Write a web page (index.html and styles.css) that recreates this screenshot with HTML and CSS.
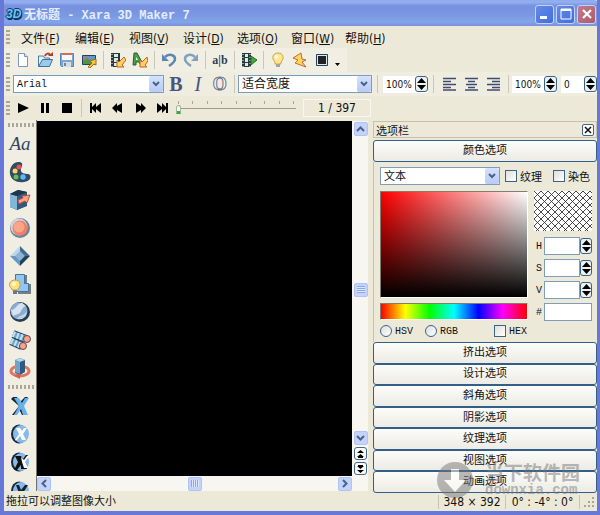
FILE: index.html
```html
<!DOCTYPE html>
<html lang="zh-CN">
<head>
    <meta charset="UTF-8">
    <meta name="viewport" content="width=device-width, initial-scale=1.0">
    <title>无标题 - Xara 3D Maker 7</title>
    <link rel="stylesheet" href="styles.css">
</head>
<body>
    <div class="window">
        <header class="titlebar">
            <span class="app-icon">3D</span>
            <h1 class="title">无标题 - Xara 3D Maker 7</h1>
            <button class="win-btn" aria-label="最小化"><svg width="16" height="16"><path d="M3 10h7v3H3z" fill="#fff"/></svg></button>
            <button class="win-btn" aria-label="最大化"><svg width="16" height="16"><path d="M3 3h10v10H3z" fill="none" stroke="#fff"/><path d="M3 3h10v2H3z" fill="#fff"/></svg></button>
            <button class="win-btn close" aria-label="关闭"><svg width="16" height="16"><path d="M4 4l8 8M12 4l-8 8" stroke="#fff" stroke-width="2.200"/></svg></button>
        </header>

        <nav class="menu">
            <span class="grip"></span>
            <a href="#">文件(<u>F</u>)</a>
            <a href="#">编辑(<u>E</u>)</a>
            <a href="#">视图(<u>V</u>)</a>
            <a href="#">设计(<u>D</u>)</a>
            <a href="#">选项(<u>O</u>)</a>
            <a href="#">窗口(<u>W</u>)</a>
            <a href="#">帮助(<u>H</u>)</a>
        </nav>

        <div class="toolbar main-tools">
            <span class="grip"></span>
            <button class="tool" aria-label="新建"><svg width="16" height="16"><path d="M3.500 1.500h6l3 3v10h-9z" fill="#fff" stroke="#7d96bd"/><path d="M9.500 1.500v3h3" fill="#dce6f5" stroke="#7d96bd"/></svg></button>
            <button class="tool" aria-label="打开"><svg width="16" height="16"><path d="M1.500 14V4h5l1 2h5v8z" fill="#e3eef6" stroke="#4d7e9f"/><path d="M1.500 14.500l4-7h10l-3 7z" fill="#9ccbe9" stroke="#3b7298"/><path d="M8 4c1-3 4-3 5-1" fill="none" stroke="#b23c2c" stroke-width="2"/><path d="M11 4h5V0z" fill="#b23c2c"/></svg></button>
            <button class="tool" aria-label="保存"><svg width="16" height="16"><path d="M1.500 1.500h13v13h-12l-1-1z" fill="#79a8d5" stroke="#5787b8"/><path d="M3 2h10v6H3z" fill="#f7f7f7"/><path d="M3 1h10v2H3z" fill="#d96a56"/><path d="M4 10h8v5H4z" fill="#d9dde2"/><path d="M5 11h2v3H5z" fill="#6685a8"/></svg></button>
            <button class="tool" aria-label="导出"><svg width="16" height="16"><path d="M1.500 3.500h13v9h-13z" fill="#5c9bd0" stroke="#27415e"/><path d="M2 9l4-3 4 3 2-2v5H2z" fill="#4f9544"/><circle cx="5" cy="6" r="1.500" fill="#e06450"/><path d="M7 15l4-4-2-2 6-2v6l-2-1-4 4z" fill="#f8c53e" stroke="#a86b15"/></svg></button>
            <span class="sep"></span>
            <button class="tool" aria-label="导出动画"><svg width="16" height="16"><path d="M1 1h9v14H1z" fill="#263c3d"/><path d="M4 2h4v3H4zM4 6h4v4H4zM4 11h4v3H4z" fill="#dfece4"/><path d="M2 2v13" stroke="#fff" stroke-dasharray="1 2"/><path d="M14 5l-5 5-2-2v7h7l-2-2 4-5z" fill="#ffd065" stroke="#bf641f"/></svg></button>
            <button class="tool" aria-label="导出矢量"><svg width="16" height="16"><path d="M2 1l3 0 6 11H8L7 10H4v3H1z" fill="#4a9d45" stroke="#28602b"/><path d="M4 5l2 3H4z" fill="#fff"/><path d="M15 5l-5 5-2-2v7h7l-2-2 3-4z" fill="#ffd065" stroke="#bf641f"/></svg></button>
            <span class="sep"></span>
            <button class="tool" aria-label="撤消"><svg width="16" height="16"><path d="M4 5c4-4 10-2 10 2 0 3-3 5-6 7" fill="none" stroke="#5e86b3" stroke-width="2.500"/><path d="M1 2v7h7z" fill="#5e86b3"/></svg></button>
            <button class="tool" aria-label="重做"><svg width="16" height="16"><path d="M12 5c-4-4-10-2-10 2 0 3 3 5 6 7" fill="none" stroke="#80a2bd" stroke-width="2.500"/><path d="M15 2v7H8z" fill="#80a2bd"/></svg></button>
            <span class="sep"></span>
            <button class="tool text-tool" aria-label="文本">a|b</button>
            <span class="sep"></span>
            <button class="tool" aria-label="播放动画"><svg width="16" height="16"><path d="M1 1h9v14H1z" fill="#263c3d"/><path d="M4 2h3v3H4zM4 6h3v4H4zM4 11h3v3H4z" fill="#dfece4"/><path d="M2 2v13M9 2v13" stroke="#fff" stroke-dasharray="1 2"/><path d="M10 4l6 4-6 5z" fill="#43a83c" stroke="#2b6e26"/></svg></button>
            <span class="sep"></span>
            <button class="tool" aria-label="灯光"><svg width="16" height="16"><path d="M6 11h4v4H6z" fill="#98a4ae"/><path d="M5 10C1 6 3 1 8 1s7 5 3 9v2H5z" fill="#ffe78a" stroke="#caa352"/><circle cx="6.500" cy="5" r="2" fill="#fffbe0"/></svg></button>
            <button class="tool" aria-label="动画"><svg width="16" height="16"><path d="M9 1L1 6l5 2-3 3 11 4-4-5 4-2-4-1z" fill="#ffd65c" stroke="#c0683a"/></svg></button>
            <button class="tool" aria-label="窗口大小"><svg width="16" height="16"><path d="M2.500 2.500h11v11h-11z" fill="#d9e9f7" stroke="#253f58"/><path d="M4 4h8v8H4z" fill="#222"/></svg></button>
            <button class="more" aria-label="更多"><svg width="5" height="3"><path d="M0 0h5L2.500 3z"/></svg></button>
        </div>

        <div class="toolbar text-tools">
            <span class="grip"></span>
            <span class="combo font-combo">
                <select aria-label="字体"><option>Arial</option></select>
                <svg class="arrow" width="14" height="16"><path d="M4 6l3 3 3-3" fill="none" stroke="#4d6185" stroke-width="2"/></svg>
            </span>
            <button class="tool letter bold" aria-label="粗体">B</button>
            <button class="tool letter italic" aria-label="斜体">I</button>
            <button class="tool letter outline" aria-label="轮廓">O</button>
            <span class="sep"></span>
            <span class="combo fit-combo">
                <select aria-label="宽度"><option>适合宽度</option></select>
                <svg class="arrow" width="14" height="16"><path d="M4 6l3 3 3-3" fill="none" stroke="#4d6185" stroke-width="2"/></svg>
            </span>
            <span class="sep wide"></span>
            <span class="spin-box"><input aria-label="宽高比" value="100%"><button class="spin" aria-label="调整"><svg width="9" height="12"><path d="M4.500 0L9 5H0zM4.500 12L9 7H0z"/></svg></button></span>
            <span class="sep wide"></span>
            <button class="tool" aria-label="左对齐"><svg width="14" height="14"><path d="M0 1.500h13M0 4.500h8M0 7.500h13M0 10.500h8M0 13h13" stroke="#414b70" stroke-width="1.500"/></svg></button>
            <button class="tool" aria-label="居中"><svg width="14" height="14"><path d="M0 1.500h13M3 4.500h7M1 7.500h11M3 10.500h7M0 13h13" stroke="#414b70" stroke-width="1.500"/></svg></button>
            <button class="tool" aria-label="右对齐"><svg width="14" height="14"><path d="M0 1.500h13M5 4.500h8M0 7.500h13M5 10.500h8M0 13h13" stroke="#414b70" stroke-width="1.500"/></svg></button>
            <span class="sep"></span>
            <span class="spin-box"><input aria-label="行距" value="100%"><button class="spin" aria-label="调整"><svg width="9" height="12"><path d="M4.500 0L9 5H0zM4.500 12L9 7H0z"/></svg></button></span>
            <span class="spin-box second"><input aria-label="字距" value="0"><button class="spin" aria-label="调整"><svg width="9" height="12"><path d="M4.500 0L9 5H0zM4.500 12L9 7H0z"/></svg></button></span>
        </div>

        <div class="toolbar play-tools">
            <span class="grip"></span>
            <button class="tool" aria-label="播放"><svg width="12" height="12"><path d="M1 1l11 5-11 5z"/></svg></button>
            <button class="tool" aria-label="暂停"><svg width="12" height="12"><path d="M2 1h3v10H2zM7 1h3v10H7z"/></svg></button>
            <button class="tool" aria-label="停止"><svg width="12" height="12"><path d="M1 1h10v10H1z"/></svg></button>
            <span class="sep"></span>
            <button class="tool" aria-label="第一帧"><svg width="12" height="12"><path d="M0 1h2v4l4-4v4l5-4v10L6 7v4L2 7v4H0z"/></svg></button>
            <button class="tool" aria-label="上一帧"><svg width="12" height="12"><path d="M0 6l5-5v3l5-3v10L5 8v3z"/></svg></button>
            <button class="tool" aria-label="下一帧"><svg width="12" height="12"><path d="M12 6L7 1v3L2 1v10l5-3v3z"/></svg></button>
            <button class="tool" aria-label="最后帧"><svg width="12" height="12"><path d="M12 1h-2v4L6 1v4L1 1v10l5-4v4l4-4v4h2z"/></svg></button>
            <div class="timeline">
                <div class="ticks"><i></i><i></i><i></i><i></i><i></i><i></i><i></i><i></i><i></i></div>
                <input type="range" aria-label="帧" min="1" max="397" value="1">
            </div>
            <output class="frame">1 / 397</output>
        </div>

        <main class="work">
            <aside class="side">
                <span class="grip-h"></span>
                <button class="side-btn aa" aria-label="文本选项">Aa</button>
                <button class="side-btn" aria-label="颜色选项"><svg width="22" height="22"><path d="M11 1C4 0 0 7 1 13s7 9 14 8 7-5 6-7-8 0-9-4 4-7-1-9z" fill="#314b63"/><circle cx="10" cy="6" r="2.500" fill="#e9524f"/><circle cx="6" cy="10" r="2.500" fill="#ffd467"/><circle cx="7" cy="16" r="2.500" fill="#63c34b"/><circle cx="14" cy="16" r="2.700" fill="#5eb9f2"/></svg></button>
                <button class="side-btn" aria-label="挤出选项"><svg width="22" height="22"><path d="M1 5l8-4 9 2v14l-10 4-7-3z" fill="#24445f"/><path d="M1 5l7 2v14l-7-3z" fill="#83b7d9"/><path d="M8 7l10-4v13L8 21z" fill="#315b7e"/><path d="M1 5l8-4 9 2L8 7z" fill="#203649"/><path d="M9 11l5-2-1-2 8-1-3 8-2-2-6 3z" fill="#ffa184" stroke="#b94d3c"/></svg></button>
                <button class="side-btn" aria-label="按钮选项"><svg width="22" height="22"><circle cx="11" cy="11" r="10" fill="#6f819d"/><circle cx="10" cy="10" r="8.500" fill="#cdd5e2"/><circle cx="11" cy="11" r="7.500" fill="#f07f66"/><circle cx="10" cy="10" r="5.500" fill="#fda58a"/></svg></button>
                <button class="side-btn" aria-label="斜角选项"><svg width="22" height="22"><path d="M11 1v10H1z" fill="#bad7eb"/><path d="M11 1l10 10H11z" fill="#456b91"/><path d="M1 11h10v10z" fill="#6499c6"/><path d="M21 11H11v10z" fill="#233f5d"/><path d="M11 6l5 5-5 5-5-5z" fill="#8cb3d4"/></svg></button>
                <button class="side-btn" aria-label="阴影选项"><svg width="22" height="22"><path d="M9 2h9v9h4v10H9z" fill="#777f83"/><path d="M6.500 1.500h9v9h4v8h-13z" fill="#8fc6f3" stroke="#4a7294"/><path d="M4 16h4v5H4z" fill="#65798c"/><path d="M3 16c-5-4-2-9 3-9s7 5 3 9v1H3z" fill="#ffe17b" stroke="#c09b55"/><circle cx="5" cy="11" r="2" fill="#fff7cf"/></svg></button>
                <button class="side-btn" aria-label="纹理选项"><svg width="22" height="22"><circle cx="11" cy="11" r="10" fill="#283c50"/><circle cx="10" cy="10" r="8.500" fill="#88add0"/><path d="M2 9c5 0 5-6 11-7l4 3c-5 1-4 7-8 8l-5 2z" fill="#d7e4ef"/><path d="M8 18c3-5 6-2 10-8l-1 5-4 3z" fill="#c1d5e8"/></svg></button>
                <button class="side-btn" aria-label="视图选项"><svg width="22" height="22"><path d="M4 5l13 5" stroke="#25435c" stroke-width="8"/><path d="M4 5l13 5" stroke="#6fa3c8" stroke-width="6"/><path d="M4 5l13 5" stroke="#c3e2f4" stroke-width="6" stroke-dasharray="2 2"/><path d="M2 12l11 5" stroke="#25435c" stroke-width="8"/><path d="M2 12l11 5" stroke="#6fa3c8" stroke-width="6"/><path d="M2 12l11 5" stroke="#c3e2f4" stroke-width="6" stroke-dasharray="2 2"/><circle cx="18" cy="10" r="3.500" fill="#f9a38c" stroke="#69434d"/><circle cx="14" cy="17" r="3.500" fill="#f9a38c" stroke="#69434d"/></svg></button>
                <button class="side-btn" aria-label="动画选项"><svg width="22" height="22"><ellipse cx="11" cy="14" rx="9" ry="5" fill="none" stroke="#e17662" stroke-width="3"/><path d="M6 3l5-2 5 2v12l-5 3-5-2z" fill="#315b7e"/><path d="M6 3l5 2v12l-5-2z" fill="#6fa3c8"/><path d="M6 3l5-2 5 2-5 2z" fill="#b2d7ef"/><path d="M11 16v6l-6-3z" fill="#d85e50"/></svg></button>
                <span class="grip-h"></span>
                <button class="side-btn" aria-label="样式一"><svg width="20" height="20"><path d="M1 3l2-2h4l3 5 5-5h3l-6 9 5 9h-5l-3-6-5 6H2l7-9z" fill="#172638"/><path d="M4 2h5l3 5 3-5h4l-5 8 4 9h-5l-2-6-4 6H4l5-9z" fill="#69b1e8"/></svg></button>
                <button class="side-btn" aria-label="样式二"><svg width="20" height="20"><ellipse cx="9" cy="10" rx="8" ry="9.500" fill="#172638"/><ellipse cx="11" cy="10" rx="8" ry="9" fill="#89bbea"/><path d="M6 4h4l2 3 2-3h3l-4 6 3 6h-4l-2-4-3 4H5l4-6z" fill="#fff"/></svg></button>
                <button class="side-btn" aria-label="样式三"><svg width="20" height="20"><ellipse cx="9" cy="10" rx="8" ry="9.500" fill="#172638"/><ellipse cx="11" cy="10" rx="8" ry="9" fill="#89bbea"/><path d="M5 4h6l2 3 3-4h2l-4 7 3 7h-6v-4l-4 5H4l4-8z" fill="#111"/><path d="M11 5l3 3 3-4h2l-4 6 3 6h-4l-2-6z" fill="#fff"/></svg></button>
                <button class="side-btn" aria-label="样式四"><svg width="20" height="20"><ellipse cx="9" cy="11" rx="8" ry="9.500" fill="#172638"/><ellipse cx="11" cy="11" rx="8" ry="9" fill="#89bbea"/><path d="M6 5h3l2 5 4-5h3l-5 8v5h-4v-5z" fill="#152131"/></svg></button>
            </aside>

            <section class="view">
                <div class="canvas"></div>
                <div class="vscroll">
                    <button class="scroll-btn" aria-label="向上"><svg width="9" height="6"><path d="M1 5l3.500-3.500L8 5" fill="none" stroke="#4d6185" stroke-width="2"/></svg></button>
                    <div class="rail"><span class="thumb"><i></i></span></div>
                    <button class="scroll-btn" aria-label="向下"><svg width="9" height="6"><path d="M1 1l3.500 3.500L8 1" fill="none" stroke="#4d6185" stroke-width="2"/></svg></button>
                    <button class="page-btn" aria-label="上一页"><svg width="7" height="8"><path d="M3.500 0L7 3H0zM3.500 4L7 7H0zM1 7h5v1H1z"/></svg></button>
                    <button class="page-btn" aria-label="下一页"><svg width="7" height="8"><path d="M3.500 4L7 1H0zM3.500 8L7 5H0zM1 0h5v1H1z"/></svg></button>
                </div>
                <div class="hscroll">
                    <button class="scroll-btn" aria-label="向左"><svg width="6" height="9"><path d="M5 1L1.500 4.500 5 8" fill="none" stroke="#4d6185" stroke-width="2"/></svg></button>
                    <div class="rail"><span class="thumb"><i></i></span></div>
                    <button class="scroll-btn" aria-label="向右"><svg width="6" height="9"><path d="M1 1l3.500 3.500L1 8" fill="none" stroke="#4d6185" stroke-width="2"/></svg></button>
                </div>
            </section>

            <section class="options">
                <div class="options-head">
                    <h2>选项栏</h2>
                    <button class="panel-close" aria-label="关闭选项栏"><svg width="8" height="8"><path d="M1 1l6 6M7 1L1 7" stroke="#111" stroke-width="1.500"/></svg></button>
                </div>
                <button class="group-btn first">颜色选项</button>
                <div class="color-body">
                    <div class="pick-row">
                        <span class="combo">
                            <select aria-label="对象"><option>文本</option></select>
                            <svg class="arrow" width="14" height="16"><path d="M4 6l3 3 3-3" fill="none" stroke="#4d6185" stroke-width="2"/></svg>
                        </span>
                        <label><input type="checkbox">纹理</label>
                        <label class="tint"><input type="checkbox">染色</label>
                    </div>
                    <div class="color-grid">
                        <div class="left-col">
                            <div class="shade"></div>
                            <div class="hue"></div>
                        </div>
                        <div class="right-col">
                            <svg class="swatch" width="58" height="40">
                                <defs><pattern id="hatch" width="7" height="7" patternUnits="userSpaceOnUse"><path d="M0 0l7 7M7 0L0 7" stroke="#333" stroke-width="0.900"/></pattern></defs>
                                <rect width="58" height="40" fill="#fff"/><rect width="58" height="40" fill="url(#hatch)"/>
                            </svg>
                            <div class="value"><label for="h">H</label><input id="h"><button class="spin" aria-label="调整 H"><svg width="9" height="12"><path d="M4.500 0L9 5H0zM4.500 12L9 7H0z"/></svg></button></div>
                            <div class="value"><label for="s">S</label><input id="s"><button class="spin" aria-label="调整 S"><svg width="9" height="12"><path d="M4.500 0L9 5H0zM4.500 12L9 7H0z"/></svg></button></div>
                            <div class="value"><label for="v">V</label><input id="v"><button class="spin" aria-label="调整 V"><svg width="9" height="12"><path d="M4.500 0L9 5H0zM4.500 12L9 7H0z"/></svg></button></div>
                            <div class="value"><label for="hex">#</label><input id="hex"></div>
                        </div>
                    </div>
                    <div class="mode-row">
                        <label><input type="radio" name="mode">HSV</label>
                        <label><input type="radio" name="mode">RGB</label>
                        <label class="hex"><input type="checkbox">HEX</label>
                    </div>
                </div>
                <div class="groups">
                    <button class="group-btn">挤出选项</button>
                    <button class="group-btn">设计选项</button>
                    <button class="group-btn">斜角选项</button>
                    <button class="group-btn">阴影选项</button>
                    <button class="group-btn">纹理选项</button>
                    <button class="group-btn">视图选项</button>
                    <button class="group-btn">动画选项</button>
                </div>
            </section>
        </main>

        <footer class="status">
            <span class="hint">拖拉可以调整图像大小</span>
            <span class="cell size">348 × 392</span>
            <span class="cell angle">0° : -4° : 0°</span>
            <span class="cell corner"><svg width="11" height="11"><path d="M9 1h2M5 5h2M9 5h2M1 9h2M5 9h2M9 9h2" stroke="#aaa694" stroke-width="2"/></svg></span>
        </footer>

        <div class="watermark">
            <svg width="38" height="38"><circle cx="19" cy="19" r="18" fill="#777"/><path d="M15 8h8v11h7L19 31 8 19h7z" fill="#fff"/></svg>
            <div>
                <div class="mark-name">当下软件园</div>
                <div class="mark-url">downxia.com</div>
            </div>
        </div>
    </div>
</body>
</html>
```
FILE: styles.css
```css
* {
    box-sizing: border-box;
}
body {
    margin: 0;
    font-family: "DejaVu Sans Condensed", "Noto Sans CJK SC", sans-serif;
    font-size: 12px;
    color: #111;
}
button, input, select {
    font: inherit;
    color: inherit;
    margin: 0;
    padding: 0;
    border: 0;
    background: none;
}
svg {
    display: block;
    flex: none;
}
.window {
    position: relative;
    height: 100vh;
    display: flex;
    flex-direction: column;
    overflow: hidden;
    background: #ece9d8;
    border: solid #6878d8;
    border-width: 0 3px 4px 4px;
}

/* title bar */
.titlebar {
    flex: none;
    height: 26px;
    margin: 0 -3px 0 -4px;
    padding: 2px 4px 0 6px;
    display: flex;
    align-items: center;
    gap: 2px;
    background: linear-gradient(#8baaf0, #95b0ef 2px, #7691e0 6px, #7b98e2 15px, #82a5e9 22px, #7890df);
    border-radius: 6px 6px 0 0;
}
.app-icon {
    width: 16px;
    font: italic bold 12px "Liberation Sans", sans-serif;
    color: #6cc6f5;
    text-shadow: 1px 0 #0b3c6e, -1px 0 #0b3c6e, 0 1px #0b3c6e, 0 -1px #0b3c6e, 1px 2px #0b2c54;
}
.title {
    flex: 1;
    margin: 0;
    font: bold 12px "Liberation Mono", "Noto Sans CJK SC", monospace;
    color: #e4edff;
}
.win-btn {
    width: 19px;
    height: 19px;
    display: flex;
    align-items: center;
    justify-content: center;
    border: 1px solid #c3d2f8;
    border-radius: 3px;
    background: linear-gradient(135deg, #648be8, #426dde);
}
.win-btn.close {
    background: linear-gradient(135deg, #c17b8e, #ac5b6b);
}

/* menu and toolbars */
.menu, .toolbar {
    flex: none;
    display: flex;
    align-items: center;
    padding-left: 2px;
}
.menu {
    height: 22px;
    gap: 16px;
}
.menu .grip {
    margin-right: -5px;
}
.menu a {
    width: 38px;
    white-space: nowrap;
    color: #111;
    text-decoration: none;
}
.toolbar {
    height: 24px;
}
.grip {
    flex: none;
    width: 4px;
    height: 16px;
    margin-right: 2px;
    background: radial-gradient(circle, #aaa796 1px, transparent 1px) 0 0 / 2px 4px;
}
.main-tools {
    align-self: flex-start;
    padding-right: 4px;
    background: #f1efe3;
}
.text-tools {
    background: #efede0;
}
.play-tools {
    align-self: flex-start;
}
.tool {
    flex: none;
    width: 22px;
    height: 22px;
    display: flex;
    align-items: center;
    justify-content: center;
}
.sep {
    flex: none;
    width: 1px;
    height: 18px;
    margin: 0 3px;
    background: #cbc7b4;
}
.sep.wide {
    margin: 0 5px;
}
.text-tool {
    font: bold 12px "Liberation Serif", serif;
    color: #333d55;
}
.more {
    width: 10px;
    padding: 8px 2px 0;
}
.letter {
    font-family: "Liberation Serif", serif;
    font-size: 20px;
    color: #48557e;
}
.bold {
    font-weight: bold;
}
.italic {
    font-style: italic;
}
.outline {
    color: #f5f5f2;
    -webkit-text-stroke: 1px #68728e;
    font-weight: bold;
    font-size: 18px;
}
.combo {
    display: grid;
    height: 18px;
    background: #fff;
    border: 1px solid #7f9db9;
}
.combo select {
    grid-area: 1 / 1;
    width: 100%;
    min-width: 0;
    appearance: none;
    padding-left: 3px;
    outline: 0;
}
.arrow {
    grid-area: 1 / 1;
    justify-self: end;
    background: linear-gradient(#d5e1fd, #b7cbf7);
    border-radius: 2px;
    pointer-events: none;
}
.font-combo {
    width: 153px;
    margin: 0 1px;
}
.font-combo select {
    font-family: "Liberation Mono", monospace;
    font-size: 10px;
}
.fit-combo {
    width: 136px;
}
.spin-box {
    flex: none;
    width: 45px;
    height: 17px;
    display: flex;
    align-items: center;
    background: #fff;
}
.spin-box input {
    flex: 1;
    min-width: 0;
    padding-left: 3px;
    font-size: 10px;
}
.spin-box.second {
    width: 36px;
    margin-left: 4px;
}
.spin {
    flex: none;
    width: 13px;
    height: 16px;
    display: flex;
    align-items: center;
    justify-content: center;
    background: #edf0f1;
    border: 1px solid #376287;
    border-radius: 3px;
}
.timeline {
    width: 126px;
    height: 14px;
    padding: 0 3px;
}
.ticks {
    display: flex;
    justify-content: space-between;
    padding: 0 2px;
}
.ticks i {
    width: 1px;
    height: 3px;
    background: #aaa796;
}
.timeline input {
    display: block;
    width: 100%;
    height: 10px;
    appearance: none;
    background: linear-gradient(#9b9a90, #9b9a90) 0 4px / 100% 1px no-repeat;
}
.timeline input::-webkit-slider-thumb {
    appearance: none;
    width: 5px;
    height: 9px;
    background: linear-gradient(#f7f7f2 5px, #25b436 5px);
    border: 1px solid #a4b5a0;
    border-bottom-color: #25b436;
    border-radius: 3px 3px 0 0;
}
.frame {
    width: 68px;
    height: 18px;
    margin-left: 4px;
    border: 1px solid #f8f6ed;
    line-height: 16px;
    text-align: center;
}

/* work area */
.work {
    flex: 1;
    min-height: 0;
    display: flex;
}
.side {
    flex: none;
    width: 32px;
    margin-bottom: 2px;
    overflow: hidden;
    background: #f0eee2;
}
.grip-h {
    display: block;
    height: 4px;
    margin: 3px 2px 3px 3px;
    background: radial-gradient(circle, #aaa796 1px, transparent 1px) 0 0 / 4px 2px;
}
.side-btn {
    width: 32px;
    height: 28px;
    display: flex;
    align-items: center;
    justify-content: center;
}
.aa {
    font: italic 19px "Liberation Serif", serif;
    color: #304564;
}
.view {
    flex: 1;
    min-width: 0;
    display: grid;
    grid-template: 1fr 15px / 1fr 16px;
    margin-bottom: 2px;
    padding-top: 1px;
    border-left: 1px solid #77756b;
}
.canvas {
    background: #000;
}
.vscroll {
    grid-row: span 2;
    display: flex;
    flex-direction: column;
    align-items: center;
    padding: 1px 0 0 1px;
    background: #f7f6f1;
}
.hscroll {
    display: flex;
    align-items: center;
    background: #f7f6f1;
}
.scroll-btn, .thumb {
    flex: none;
    width: 14px;
    height: 14px;
    display: flex;
    align-items: center;
    justify-content: center;
    background: #c4d3fb;
    border: 1px solid #b0c3f4;
    border-radius: 2px;
}
.rail {
    flex: 1;
    display: flex;
    align-items: center;
    justify-content: center;
}
.vscroll .rail {
    padding-top: 12px;
}
.thumb i {
    width: 8px;
    height: 7px;
    background: repeating-linear-gradient(#8ca7e8 0 1px, #dee7ff 1px 2px);
}
.hscroll .thumb i {
    background: repeating-linear-gradient(90deg, #8ca7e8 0 1px, #dee7ff 1px 2px);
}
.page-btn {
    flex: none;
    width: 13px;
    height: 13px;
    margin-top: 2px;
    display: flex;
    align-items: center;
    justify-content: center;
    border: 1px solid #42678b;
    border-radius: 3px;
    background: #fafaf6;
}
.page-btn:last-child {
    margin-bottom: 16px;
}

/* options panel */
.options {
    flex: none;
    width: 224px;
    margin-left: 5px;
    display: flex;
    flex-direction: column;
}
.options-head {
    height: 17px;
    margin: 1px 0 2px;
    padding: 0 2px;
    display: flex;
    align-items: center;
    justify-content: space-between;
    border: 1px solid #c5c1ae;
}
.options-head h2 {
    margin: 0;
    font-size: 11px;
    font-weight: normal;
}
.panel-close {
    width: 12px;
    height: 12px;
    display: flex;
    align-items: center;
    justify-content: center;
    border: 1px solid #42678b;
    border-radius: 2px;
    background: #fff;
}
.group-btn {
    flex: 1;
    min-height: 0;
    font-size: 11px;
    line-height: 16px;
    border: 1px solid #315f88;
    border-radius: 3px;
    background: linear-gradient(#fcfcfa, #ecebe5);
}
.group-btn.first {
    flex: none;
    height: 22px;
}
.groups {
    flex: 1;
    min-height: 0;
    display: flex;
    flex-direction: column;
}
.color-body {
    flex: none;
    height: 180px;
    padding: 5px 5px 0 6px;
    border-left: 1px solid #c5c1ae;
}
.pick-row {
    display: flex;
    align-items: center;
    height: 18px;
}
.pick-row .combo {
    width: 120px;
    margin-right: 5px;
    font-size: 11px;
}
.pick-row label, .mode-row label {
    display: flex;
    align-items: center;
    gap: 3px;
    font-size: 11px;
}
.tint {
    margin-left: 11px;
}
input[type="checkbox"], input[type="radio"] {
    appearance: none;
    width: 12px;
    height: 12px;
    border: 1px solid #3b6488;
    background: linear-gradient(135deg, #dedfd9, #fff);
}
input[type="radio"] {
    border-radius: 50%;
}
.color-grid {
    display: flex;
    gap: 6px;
    margin-top: 6px;
}
.left-col {
    flex: 1;
    display: flex;
    flex-direction: column;
    gap: 5px;
}
.shade, .hue {
    border: 1px solid;
    border-color: #807e72 #fff #fff #807e72;
}
.shade {
    height: 107px;
    background: linear-gradient(transparent, #000), linear-gradient(90deg, #f00, #fff);
}
.hue {
    height: 17px;
    background: linear-gradient(90deg, red, yellow, lime, cyan, blue, magenta, red);
}
.right-col {
    width: 58px;
    display: flex;
    flex-direction: column;
    gap: 4px;
}
.swatch {
    margin-bottom: 2px;
}
.value {
    height: 18px;
    display: flex;
    align-items: center;
    font-family: "Liberation Mono", monospace;
    font-size: 10px;
}
.value label {
    width: 10px;
    padding-left: 2px;
}
.value input {
    flex: 1;
    min-width: 0;
    height: 18px;
    background: #fff;
    border: 1px solid #7f9db9;
}
.value .spin {
    width: 12px;
}
.mode-row {
    display: flex;
    gap: 12px;
    height: 20px;
}
.mode-row label {
    font-family: "Liberation Mono", monospace;
    font-size: 10px;
}
.mode-row .hex {
    margin-left: 24px;
}

/* status bar */
.status {
    flex: none;
    height: 18px;
    display: flex;
    align-items: center;
    line-height: 16px;
}
.hint {
    flex: 1;
    padding-left: 2px;
    font-size: 11px;
}
.cell {
    height: 14px;
    display: flex;
    align-items: center;
    justify-content: center;
    border-left: 1px solid #c9c5b2;
    white-space: nowrap;
}
.size {
    width: 67px;
}
.angle {
    width: 74px;
}
.corner {
    width: 18px;
}

.watermark {
    position: absolute;
    right: 17px;
    bottom: 12px;
    display: flex;
    align-items: center;
    gap: 11px;
    color: #777;
    opacity: 0.5;
    pointer-events: none;
}
.mark-name {
    font-size: 19px;
    font-weight: bold;
    line-height: 20px;
}
.mark-url {
    font: bold 14px/14px "Liberation Mono", monospace;
}
```
